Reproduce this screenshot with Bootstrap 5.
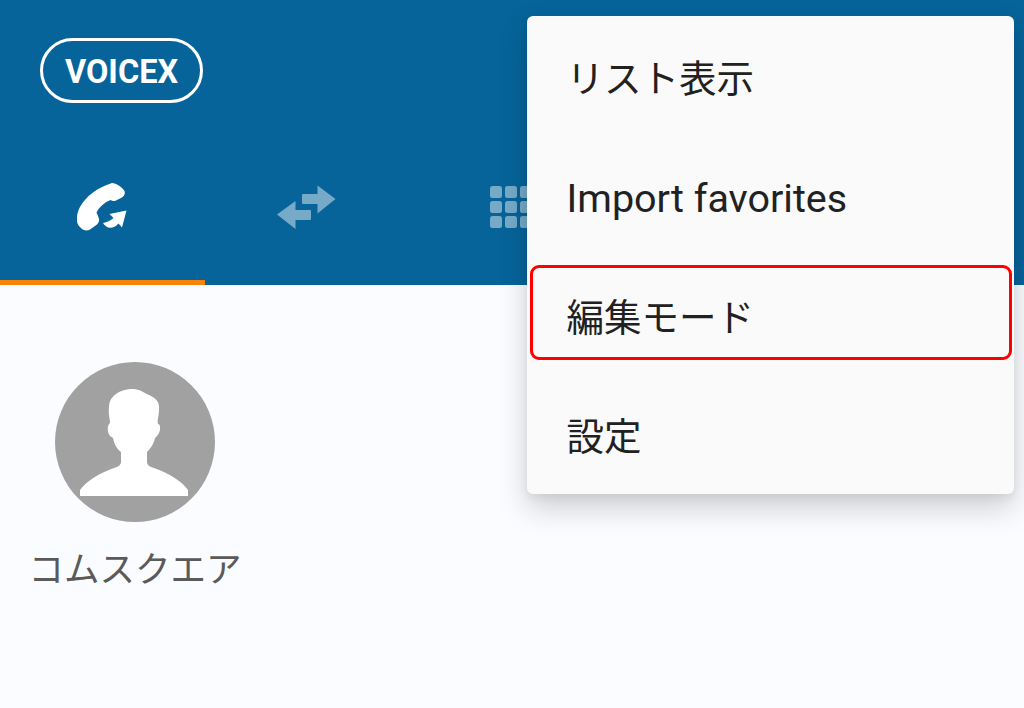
<!DOCTYPE html>
<html lang="ja">
  <head>
    <meta charset="UTF-8" />
    <meta name="viewport" content="width=device-width, initial-scale=1.0" />
    <title>VOICEX</title>
    <link
      href="https://cdn.jsdelivr.net/npm/bootstrap@5.3.0/dist/css/bootstrap.min.css"
      rel="stylesheet"
    />
    <style>
      html,
      body {
        height: 100%;
      }
      body {
        background-color: #fbfcff;
        font-family: Roboto, "Noto Sans CJK JP", sans-serif;
        overflow: hidden;
      }
      .app-header {
        background-color: #06649a;
        height: 285px;
        padding-top: 38px;
      }
      .brand-pill {
        border: 3px solid #fff;
        border-radius: 33px;
        color: #fff;
        font-size: 32.5px;
        font-weight: 700;
        height: 65px;
        margin-left: 40px;
        padding-top: 4px;
        width: 163px;
      }
      .tab-row {
        height: 151px;
        margin-top: 31px;
      }
      .tab-row .nav-link {
        align-items: center;
        border-bottom: 5px solid transparent;
        display: flex;
        height: 100%;
        justify-content: center;
        padding: 0;
      }
      .tab-row .nav-link.active {
        border-bottom-color: #f98208;
      }
      .tab-icon {
        display: block;
      }
      .tab-dim {
        opacity: 0.45;
      }
      .contact-tile {
        padding-top: 77px;
        width: 270px;
      }
      .contact-name {
        color: #5a5a5a;
        font-size: 35.5px;
        font-weight: 400;
        line-height: 1;
        margin-top: 31px;
        white-space: nowrap;
      }
      .app-menu {
        background-color: #fafafa;
        border: 0;
        border-radius: 6px;
        box-shadow: 0 14px 30px rgba(0, 0, 0, 0.18), 0 4px 10px rgba(0, 0, 0, 0.06);
        left: 527px;
        padding: 0;
        top: 16px;
        width: 487px;
      }
      .app-menu .dropdown-item {
        align-items: center;
        color: #212121;
        display: flex;
        font-size: 37.5px;
        height: 119.5px;
        padding: 6px 0 0 39.5px;
        position: relative;
      }
      .app-menu .dropdown-item:hover {
        background-color: transparent;
      }
      .app-menu .menu-latin {
        font-size: 39.5px;
      }
      .menu-mark::after {
        border: 3px solid #f00;
        border-radius: 9px;
        bottom: 15px;
        content: "";
        left: 3px;
        position: absolute;
        right: 2px;
        top: 10px;
      }
    </style>
    <script src="https://cdn.jsdelivr.net/npm/bootstrap@5.3.0/dist/js/bootstrap.bundle.min.js"></script>
  </head>
  <body class="position-relative">
    <header class="app-header">
      <div class="brand-pill d-flex align-items-center justify-content-center">
        VOICEX
      </div>
      <ul class="nav nav-justified tab-row">
        <li class="nav-item">
          <a class="nav-link active" href="#" aria-label="Calls">
            <svg class="tab-icon" width="50" height="48" viewBox="78 184 50 48" fill="#fff">
              <path d="M113 184C117 184 123 188 125.500 192C126.500 195 125 197.500 122 199L117 201.500C115 202.500 113 202 111.500 201C106 203 100 208 97.500 213.500C98.500 215.500 99.500 218 100 220C100.500 222 99.500 224 98 225.500L91 230.500C88 232 85 231.500 83 230C79 227 77 223 78 218C79 206 91 191 113 184Z" />
              <path d="M127.500 211.500L110.500 215L114.500 219C111.500 221.500 108 223.500 104 224C107.500 230 114 230.500 119.500 224.500L123 228.500Z" />
            </svg>
          </a>
        </li>
        <li class="nav-item">
          <a class="nav-link" href="#" aria-label="Transfers">
            <svg class="tab-icon tab-dim" width="60" height="45" viewBox="277 186 60 45" fill="#fff">
              <path d="M302 196a1 1 0 0 1 1-1h14.500v-8.500L335.500 200l-18 14.500V205H303a1 1 0 0 1-1-1Z" />
              <path d="M311 212a1 1 0 0 0-1-1h-14.500v-9L277 215.500 295.500 230v-9H310a1 1 0 0 0 1-1Z" />
            </svg>
          </a>
        </li>
        <li class="nav-item">
          <a class="nav-link" href="#" aria-label="Keypad">
            <svg class="tab-icon tab-dim" width="43" height="42" viewBox="0 0 43 42" fill="#fff">
              <rect x="0" y="0" width="12" height="12" rx="2.500" />
              <rect x="15" y="0" width="12" height="12" rx="2.500" />
              <rect x="30" y="0" width="12" height="12" rx="2.500" />
              <rect x="0" y="15" width="12" height="12" rx="2.500" />
              <rect x="15" y="15" width="12" height="12" rx="2.500" />
              <rect x="30" y="15" width="12" height="12" rx="2.500" />
              <rect x="0" y="30" width="12" height="12" rx="2.500" />
              <rect x="15" y="30" width="12" height="12" rx="2.500" />
              <rect x="30" y="30" width="12" height="12" rx="2.500" />
            </svg>
          </a>
        </li>
        <li class="nav-item"><a class="nav-link" href="#" aria-label="Tab 4"></a></li>
        <li class="nav-item"><a class="nav-link" href="#" aria-label="Tab 5"></a></li>
      </ul>
    </header>

    <main class="contact-tile d-flex flex-column align-items-center">
      <svg width="160" height="160" viewBox="0 0 160 160">
        <circle cx="80" cy="80" r="80" fill="#a1a1a1" />
        <path
          fill="#fff"
          d="M78 27C85 27 89 31 94 33C101 36 105 40 104 48C104 54 102 58 103 62C106 62 106 70 102 74L100 76C99 82 95 87 92 90L92 100C92 103 95 105 99 106C113 111 127 119 133 128L133 134L25 134L25 128C31 119 45 111 59 106C63 105 66 103 66 100L66 90C62 87 59 82 58 76L55 74C52 70 52 63 55 61C55 56 53 52 54 45C54 34 65 27 78 27Z"
        />
      </svg>
      <div class="contact-name">コムスクエア</div>
    </main>

    <ul class="dropdown-menu show app-menu">
      <li><a class="dropdown-item" href="#">リスト表示</a></li>
      <li><a class="dropdown-item menu-latin" href="#">Import favorites</a></li>
      <li><a class="dropdown-item menu-mark" href="#">編集モード</a></li>
      <li><a class="dropdown-item" href="#">設定</a></li>
    </ul>
  </body>
</html>
